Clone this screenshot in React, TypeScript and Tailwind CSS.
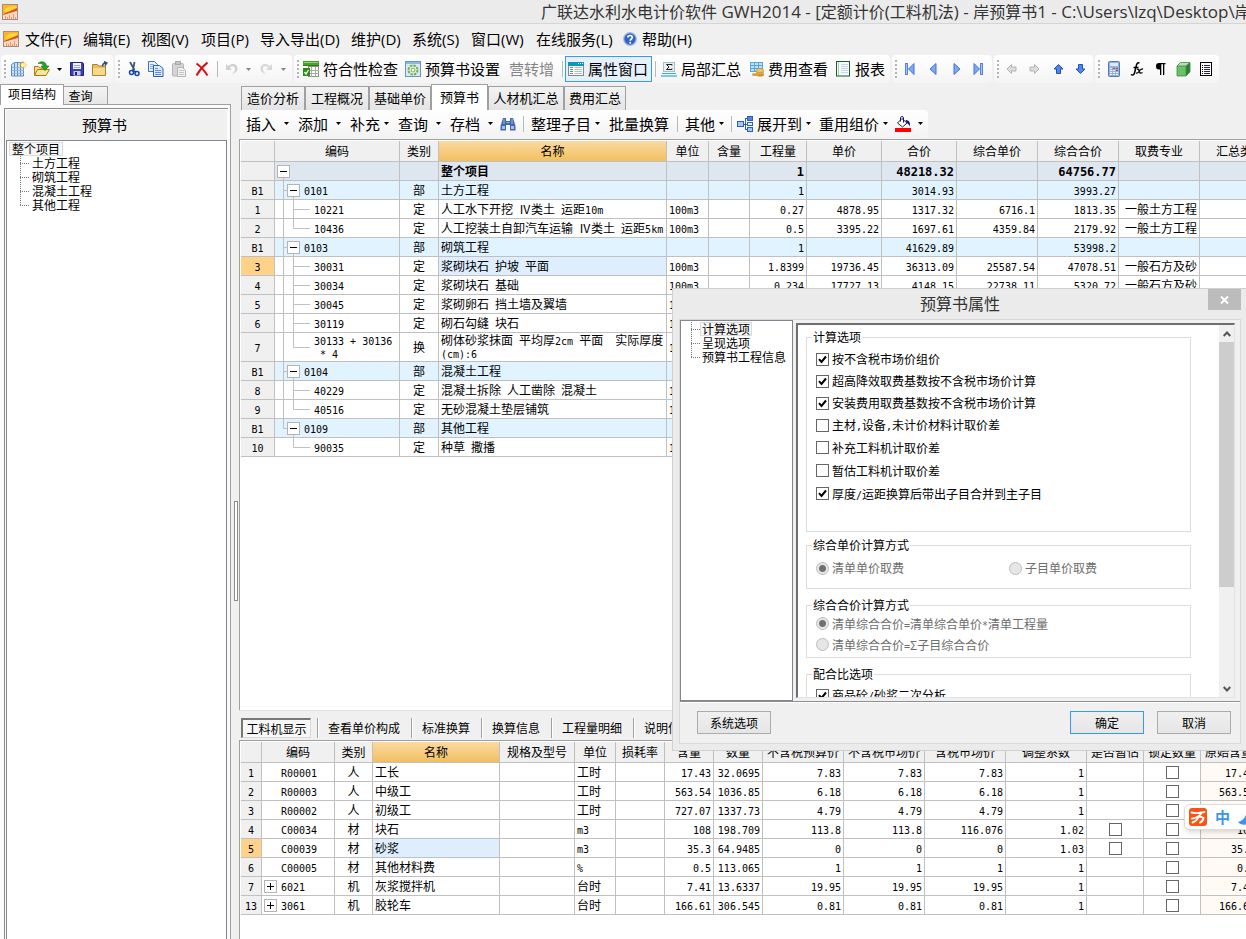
import React from "react";
import type { ReactNode } from "react";

const CJK = "font-['Noto_Sans_CJK_SC','Liberation_Sans',sans-serif]";
const UI = "font-['Open_Sans','Noto_Sans_CJK_SC',sans-serif]";
const MONO = "font-['DejaVu_Sans_Mono','Noto_Sans_CJK_SC',monospace]";

/* Half-width runs are set in the grid's monospaced face, the rest in the CJK face. */
function Mixed({ text, bold = false }: { text: string; bold?: boolean }) {
  const parts = text.split(/([\x20-\x7e]+)/).filter((p) => p !== "");
  return (
    <span className="whitespace-pre">
      {parts.map((p, i) =>
        /^[\x20-\x7e]+$/.test(p) ? (
          <span key={i} className={`leading-none ${MONO} ${bold ? "text-[12px]" : "text-[10px]"}`}>
            {p}
          </span>
        ) : (
          <span key={i}>{p}</span>
        ),
      )}
    </span>
  );
}

/* ---------- icons ---------- */

function AppIcon() {
  return (
    <svg width="16" height="16" viewBox="0 0 16 16" className="shrink-0" aria-hidden="true">
      <rect x="0.5" y="0.5" width="15" height="15" fill="#f6b27c" stroke="#a98a7c" />
      <path d="M1 1h14v4L3 10l-2-1z" fill="#f9b524" />
      <path d="M2 7C4 3 8 2 13 2l2 1-2 3-8 3z" fill="#fdd835" />
      <path d="M1 10 15 4v3L2 11.500z" fill="#d9541e" />
      <path d="M1 11 15 7v8H1z" fill="#fbd9c2" />
      <path d="M3.500 15v-3M5.500 15v-2M7.500 15v-4M9.500 15v-2M11.500 15v-5M13.500 15v-2" stroke="#e39a74" />
    </svg>
  );
}

function Caret() {
  return (
    <svg width="5" height="3" viewBox="0 0 5 3" className="shrink-0" aria-hidden="true">
      <path d="M0 0h5L2.5 3z" fill="currentColor" />
    </svg>
  );
}

function Svg({ w = 16, children }: { w?: number; children: ReactNode }) {
  return (
    <svg width={w} height="16" viewBox={`0 0 ${w} 16`} className="shrink-0" aria-hidden="true">
      {children}
    </svg>
  );
}

const NewIcon = () => (
  <Svg>
    <path d="M0.500 3.500 3.500 1.500h9v13.500h-12z" fill="#cfe2f7" stroke="#5b8cc4" />
    <path d="M3.500 2v13M6.500 2v13M9.500 2v13" stroke="#5b8cc4" />
    <path d="M1 6.500h12M1 9.500h12M1 12.500h12" stroke="#8fb4e0" />
    <path d="M12 0v8M8 4h8M9.2 1.2l5.6 5.6M14.8 1.2 9.2 6.8" stroke="#f3c21a" />
    <circle cx="12" cy="4" r="2" fill="#fff3a0" />
  </Svg>
);
const OpenIcon = () => (
  <Svg>
    <path d="M0.5 14.5V5.5h4l1.5 1.5h6v3" fill="#f5dd8a" stroke="#a87b16" />
    <path d="m0.500 14.500 3-6h12l-3.500 6z" fill="#fbe496" stroke="#a87b16" />
    <path d="M4 2.500C7-.5 12 .5 12.500 5H15l-4 4.500L7 5h2.500C9 3 7 2 4 2.500z" fill="#28a428" stroke="#0d6b0d" strokeWidth=".6" />
  </Svg>
);
const SaveIcon = () => (
  <Svg w={14}>
    <path d="M0.500 1.500h12l1 1v12h-13z" fill="#3b3fb6" stroke="#20247e" />
    <path d="M3 2h8v6H3z" fill="#f3f4fb" />
    <path d="M4 4.500h6M4 6.500h6" stroke="#9aa0d0" />
    <path d="M3.500 10h7v4.500h-7z" fill="#c6c9e8" />
    <path d="M5 11h2v3H5z" fill="#20247e" />
  </Svg>
);
const FolderIcon = () => (
  <Svg>
    <path d="M0.500 3.500h5l1.500 1.500h6.500v9.500h-13z" fill="#e9bf5c" stroke="#a8843a" />
    <path d="M1 7h12v7H1z" fill="#f8d98a" />
    <path d="M10.500 5.500c0-2 1-3.500 3.500-3.500M12 .500 15 2l-2 2.500" fill="none" stroke="#34506f" strokeWidth="1.400" />
  </Svg>
);
const CutIcon = () => (
  <Svg w={12}>
    <path d="M2 1l4.500 8M6.500 1 5 9" stroke="#3e5873" strokeWidth="1.800" />
    <circle cx="3.500" cy="11.500" r="2" fill="none" stroke="#1543a8" strokeWidth="1.500" />
    <circle cx="9" cy="12.500" r="2" fill="none" stroke="#1543a8" strokeWidth="1.500" />
    <path d="M5 9.500 8 11" stroke="#1543a8" strokeWidth="1.500" />
  </Svg>
);
const CopyIcon = () => (
  <Svg>
    <path d="M0.500 0.500h6l3 3v7h-9z" fill="#eaf3fd" stroke="#3a70c0" />
    <path d="M2 3.500h4M2 5.500h4M2 7.500h4" stroke="#7fa8e0" />
    <path d="M5.500 4.500h6l3.500 3v8h-9.500z" fill="#dceafb" stroke="#2a5fb4" />
    <path d="M7 9.500h6M7 11.500h6M7 13.500h6M7 7.500h3" stroke="#5a8fd8" />
  </Svg>
);
const PasteIcon = () => (
  <Svg w={14}>
    <rect x="0.500" y="2.500" width="11" height="12.500" rx="1" fill="#d5d5d5" stroke="#b3b3b3" />
    <rect x="3.500" y="0.500" width="5" height="3" fill="#c4c4c4" stroke="#aaa" />
    <path d="M5.500 6.500h5l3 3v6h-8z" fill="#f1f1f1" stroke="#b3b3b3" />
    <path d="M7 9.500h5M7 11.500h5M7 13.500h5" stroke="#c6c6c6" />
  </Svg>
);
const DeleteIcon = () => (
  <Svg w={14}>
    <path d="M1.500 2.500C5 5 9 9 12.500 14.500" stroke="#d40f16" strokeWidth="2" fill="none" />
    <path d="M12.500 1.500C8 5 4 10 1.500 14.500" stroke="#d40f16" strokeWidth="2" fill="none" />
  </Svg>
);
const UndoIcon = () => (
  <Svg w={13}>
    <path d="M1 3v6h6L4.800 6.800C7 4.500 10 5 10 8c0 2-1 3.500-3 5 4-1 5.500-3 5.500-5.500C12.500 3 7 1.500 3.300 5.200z" fill="#d0d0d0" />
  </Svg>
);
const RedoIcon = () => (
  <Svg w={13}>
    <path d="M12 3v6H6l2.200-2.200C6 4.500 3 5 3 8c0 2 1 3.500 3 5-4-1-5.500-3-5.500-5.500C.5 3 6 1.500 9.700 5.200z" fill="#d8d8d8" />
  </Svg>
);
const CheckSheetIcon = () => (
  <Svg>
    <rect x="5.500" y="5.500" width="10" height="10" fill="#fff" stroke="#8a8f87" />
    <path d="M6 9.500h10M6 12.500h10M8.500 6v10M12.500 6v10" stroke="#a9ada6" />
    <rect x="0" y="0" width="16" height="5" fill="#4aa329" />
    <path d="M0 4.500h16" stroke="#2f7d15" />
    <path d="M1 1.500h14" stroke="#8fd070" />
    <rect x="0" y="7" width="7" height="8" fill="#2f8a18" />
    <path d="m1.500 11 1.500 2 2.500-4" stroke="#fff" strokeWidth="1.300" fill="none" />
  </Svg>
);
const SettingsIcon = () => (
  <Svg>
    <rect x="0.500" y="0.500" width="15" height="15" fill="#d9e9fa" stroke="#6a93c8" />
    <rect x="1" y="1" width="14" height="2" fill="#8fb6e6" />
    <circle cx="8" cy="9" r="4.500" fill="#e9f6df" stroke="#6fae55" strokeWidth="2" strokeDasharray="2.500 1" />
    <circle cx="8" cy="9" r="2" fill="#fff" stroke="#6fae55" />
  </Svg>
);
const WindowListIcon = () => (
  <Svg>
    <rect x="0.500" y="1.500" width="15" height="13" fill="#fff" stroke="#7a8b99" />
    <rect x="0" y="1" width="16" height="4" fill="#0f93bf" />
    <path d="M10 2.500h1M12 2.500h1M14 2.500h1" stroke="#fff" />
    <path d="M2 6.500h3M2 8.500h3M2 10.500h3M2 12.500h3" stroke="#6f8d6f" />
    <path d="M6.500 6.500H14M6.500 8.500H14M6.500 10.500H14M6.500 12.500H14" stroke="#b4bcc4" />
  </Svg>
);
const SigmaIcon = () => (
  <Svg>
    <rect x="2.500" y="1.500" width="11" height="9" fill="#e7f0f2" stroke="#a9bec6" />
    <path d="M11 4.500V3.500H5.500L8 6 5.500 8.500H11v-1" fill="none" stroke="#222" />
    <path d="M1 12h14v1H1z" fill="#3ab0cc" />
    <path d="M0 14h16v2H0z" fill="#7ccbe0" />
  </Svg>
);
const FeeIcon = () => (
  <Svg w={14}>
    <path d="M0 1h13v10H0z" fill="#bfe0f5" />
    <path d="M0 1.500h13M0 4.500h13M0 7.500h13M0 10.500h8M.5 1v10M4.500 1v10M8.500 1v9M12.500 1v6" stroke="#58a6d8" />
    <ellipse cx="10" cy="13.500" rx="4" ry="2" fill="#c8912f" />
    <ellipse cx="10" cy="11.500" rx="4" ry="2" fill="#dca845" />
    <ellipse cx="10" cy="9.500" rx="4" ry="2" fill="#efc56c" stroke="#b98324" strokeWidth=".5" />
    <ellipse cx="5" cy="13.500" rx="3" ry="1.500" fill="#d9a23e" />
  </Svg>
);
const ReportIcon = () => (
  <Svg w={15}>
    <rect x="0.500" y="0.500" width="13" height="14.500" fill="#f7fbff" stroke="#1b5d2c" />
    <path d="M2.500 1.500v13" stroke="#5f9a6c" strokeDasharray="1 1" />
    <path d="M5 3.500h7M5 5.500h7M5 7.500h7M5 9.500h7M5 11.500h7" stroke="#c3d6ea" />
  </Svg>
);
const NavIcon = ({ dir, bar = false }: { dir: "l" | "r"; bar?: boolean }) => (
  <Svg w={10}>
    <g transform={dir === "l" ? undefined : "translate(10 0) scale(-1 1)"}>
      {bar && <rect x="0.500" y="2.500" width="2" height="11" fill="#a9c5f7" stroke="#5583dc" />}
      <path d={bar ? "M9 2.500v11L3.500 8z" : "M7 2.500v11L1 8z"} fill="#7ea8f4" stroke="#4374d8" />
    </g>
  </Svg>
);
const ArrowIcon = ({ turn, on = false }: { turn: number; on?: boolean }) => (
  <Svg w={11}>
    <path
      transform={`rotate(${turn} 5.5 8)`}
      d="M5.500 3.500 10 8H7.500v4.500h-4V8H1z"
      fill={on ? "#4f86ee" : "#dcdcdc"}
      stroke={on ? "#2450b8" : "#b4b4b4"}
    />
  </Svg>
);
const CalcIcon = () => (
  <Svg w={12}>
    <rect x="0.500" y="0.500" width="11" height="15" rx="1" fill="#8fb0e0" stroke="#5a78ac" />
    <rect x="2" y="2" width="8" height="3" fill="#dcebfb" />
    <path d="M2 7.500h8M2 9.500h8M2 11.500h8M2 13.500h8" stroke="#eef4fd" strokeDasharray="2 1" />
    <path d="M5 7.500h2M8 7.500h2M8 9.500h2" stroke="#d23c3c" />
  </Svg>
);
const FxIcon = () => (
  <Svg w={14}>
    <path d="M9.500 2C7.500 1 6.500 3 6 6L4.500 12c-.5 2-2 2.500-3.500 1.500M3.500 6.500h5" fill="none" stroke="#000" strokeWidth="1.500" />
    <path d="M7 8.500c2-1 2 1 2.500 2.500s1.500 1.500 3 .500M13 8c-2-.5-3 1-4 2.500S7 12.500 6 12" fill="none" stroke="#000" strokeWidth="1.300" />
  </Svg>
);
const ParaIcon = () => (
  <Svg w={11}>
    <path d="M10.500 2H4a3 3.200 0 0 0 0 6.400h1V14h1.300V3.200h1.700V14h1.300V3.200h1.200z" fill="#000" />
  </Svg>
);
const CubeIcon = () => (
  <Svg w={15}>
    <path d="M1 5h9v10H1z" fill="#6cc06a" />
    <path d="M1 5 4.500 1.500H14L10 5z" fill="#b4e2ac" />
    <path d="M10 5l4-3.500V11l-4 4z" fill="#2e7f34" />
    <path d="M1 5 4.500 1.500H14V11l-4 4H1zM1 5h9v10M10 5l4-3.500" fill="none" stroke="#3f8a45" strokeWidth=".8" />
  </Svg>
);
const ListIcon = () => (
  <Svg w={12}>
    <rect x="0.500" y="1.500" width="11" height="13" fill="#fff" stroke="#000" />
    <path d="M2 4.500h1M2 6.500h1M2 8.500h1M2 10.500h1M2 12.500h1" stroke="#000" />
    <path d="M4 4.500h6M4 6.500h6M4 8.500h6M4 10.500h6M4 12.500h6" stroke="#20207a" />
  </Svg>
);
const HelpIcon = () => (
  <Svg w={14}>
    <circle cx="7" cy="8" r="6.300" fill="#2f65c9" stroke="#a9bbdf" strokeWidth="1.300" />
    <path d="M4.800 6.500C4.800 3.800 9.300 3.900 9.300 6.500 9.300 8 7.200 8 7.200 9.800" fill="none" stroke="#fff" strokeWidth="1.700" />
    <circle cx="7.200" cy="11.800" r="1" fill="#fff" />
  </Svg>
);
const FindIcon = () => (
  <Svg>
    <path d="M3 2h3v3h4V2h3l2.500 8v4.500H10V9H6v5.500H.5V10z" fill="#4268ad" />
    <path d="M2 10h3v3H2zM11 10h3v3h-3z" fill="#a9c3ee" />
    <path d="M4 3v5M12 3v5M6.500 6.500h3" stroke="#9db9e8" />
  </Svg>
);
const ExpandIcon = () => (
  <Svg>
    <path d="M6 8.500h4M8.500 3v10M8 2.500h3M8 13.500h3" stroke="#3c5c94" fill="none" />
    <rect x="0.500" y="5.500" width="6" height="5" fill="#a8c6f2" stroke="#2f5fb0" />
    <rect x="10.500" y="0.500" width="5" height="4" fill="#4f86dd" stroke="#2f5fb0" />
    <rect x="10.500" y="6.500" width="5" height="3" fill="#e8f0fc" stroke="#2f5fb0" />
    <rect x="10.500" y="11.500" width="5" height="4" fill="#a8c6f2" stroke="#2f5fb0" />
  </Svg>
);
const FillIcon = () => (
  <Svg>
    <path d="M7 2.500 12 7l-4.500 4L2.500 7z" fill="#fff" stroke="#222" />
    <path d="M5.500 5.500v-4C5.500.3 8.500.3 8.500 1.500v5" fill="none" stroke="#10107a" />
    <path d="M10.500 4c3 0 5 2 4.500 6.500-1-2-1.500-2.500-3-3.500z" fill="#10107a" />
    <rect x="0" y="12" width="16" height="4" fill="#ff0000" />
  </Svg>
);

/* ---------- shared controls ---------- */

function ToolButton({
  label,
  icon,
  text,
  caret = false,
  disabled = false,
  className,
}: {
  label?: string;
  icon?: ReactNode;
  text?: string;
  caret?: boolean;
  disabled?: boolean;
  className: string;
}) {
  return (
    <button
      type="button"
      aria-label={label}
      disabled={disabled}
      className={`flex h-[26px] shrink-0 items-center whitespace-nowrap text-[15px] leading-5 ${disabled ? "text-[#858585]" : "text-black"} ${className}`}
    >
      {icon}
      {text && <span>{text}</span>}
      {caret && <Caret />}
    </button>
  );
}

function Grip({ className }: { className: string }) {
  return (
    <span className={`flex shrink-0 items-center pl-[3px] ${className}`}>
      <span className="h-[18px] w-0.5 bg-[repeating-linear-gradient(to_bottom,#b4b4b4_0_2px,transparent_2px_4px)]" />
    </span>
  );
}

function Divider({ className }: { className: string }) {
  return (
    <span className={`flex shrink-0 items-center ${className}`}>
      <span className="h-4 w-px bg-[#b9b9b9]" />
    </span>
  );
}

function ToolGroup({ children }: { children: ReactNode }) {
  return (
    <div role="toolbar" className="flex h-7 shrink-0 items-center rounded-sm bg-linear-to-b from-white to-[#f4f4f4]">
      {children}
    </div>
  );
}

function Tick({ checked = false, label }: { checked?: boolean; label?: string }) {
  return (
    <span className="inline-grid size-[13px] shrink-0 align-middle">
      <input
        type="checkbox"
        defaultChecked={checked}
        aria-label={label}
        className="peer col-start-1 row-start-1 size-[13px] appearance-none border border-[#666] bg-white"
      />
      <svg
        viewBox="0 0 13 13"
        className="pointer-events-none invisible col-start-1 row-start-1 size-[13px] peer-checked:visible"
        aria-hidden="true"
      >
        <path d="M3 6.200 5.500 9 10 3.500" fill="none" stroke="#000" strokeWidth="2" />
      </svg>
    </span>
  );
}

/* ---------- header ---------- */

const menus = [
  { text: "文件(F)", w: "w-[58px]" },
  { text: "编辑(E)", w: "w-[58px]" },
  { text: "视图(V)", w: "w-[60px]" },
  { text: "项目(P)", w: "w-[59px]" },
  { text: "导入导出(D)", w: "w-[91px]" },
  { text: "维护(D)", w: "w-[61px]" },
  { text: "系统(S)", w: "w-[59px]" },
  { text: "窗口(W)", w: "w-[65px]" },
  { text: "在线服务(L)", w: "w-[87px]" },
];

const titleParts = [
  "广联达水利水电计价软件",
  " GWH2014 - [",
  "定额计价",
  "(",
  "工料机法",
  ") - ",
  "岸预算书",
  "1 - C:\\Users\\lzq\\Desktop\\",
  "岸",
];

function Header() {
  return (
    <header className={`shrink-0 ${UI}`}>
      <div className="flex h-6 items-center overflow-hidden border-b border-[#d5d5d5] bg-[#ebebeb] pl-0.5">
        <AppIcon />
        <h1 className="ml-[523px] whitespace-pre text-[16px] leading-6 text-[#333]">
          {titleParts.map((p, i) => (
            <span key={i} className={i % 2 === 1 ? "text-[17px] leading-none" : ""}>
              {p}
            </span>
          ))}
        </h1>
      </div>
      <nav className="flex h-[31px] items-center overflow-hidden pb-0.5 pl-[3px] text-[15px] leading-5">
        <AppIcon />
        <div className="ml-1.5 flex">
          {menus.map((m) => (
            <button key={m.text} type="button" className={`shrink-0 whitespace-nowrap text-left ${m.w}`}>
              {m.text}
            </button>
          ))}
          <button type="button" className="flex shrink-0 items-center gap-[5px] whitespace-nowrap">
            <HelpIcon />
            帮助(H)
          </button>
        </div>
      </nav>
      <div className="flex h-[29px] items-start gap-0.5 overflow-hidden pl-px">
        <ToolGroup>
          <Grip className="w-[10px]" />
          <ToolButton label="新建" icon={<NewIcon />} className="w-[23px]" />
          <ToolButton label="打开" icon={<OpenIcon />} caret className="w-9 gap-[7px]" />
          <ToolButton label="保存" icon={<SaveIcon />} className="w-[22px]" />
          <ToolButton label="目录" icon={<FolderIcon />} className="w-[21px]" />
        </ToolGroup>
        <ToolGroup>
          <Grip className="w-[13px]" />
          <ToolButton label="剪切" icon={<CutIcon />} className="w-5" />
          <ToolButton label="复制" icon={<CopyIcon />} className="w-6" />
          <ToolButton label="粘贴" icon={<PasteIcon />} disabled className="w-[23px]" />
          <ToolButton label="删除" icon={<DeleteIcon />} className="w-[22px]" />
          <Divider className="w-2" />
          <ToolButton label="撤销" icon={<UndoIcon />} caret disabled className="w-[35px] gap-2" />
          <ToolButton label="恢复" icon={<RedoIcon />} caret disabled className="w-8 gap-2" />
        </ToolGroup>
        <ToolGroup>
          <Grip className="w-[9px]" />
          <ToolButton icon={<CheckSheetIcon />} text="符合性检查" className="w-[102px] gap-1" />
          <ToolButton icon={<SettingsIcon />} text="预算书设置" className="w-[104px] gap-1" />
          <ToolButton text="营转增" disabled className="w-[53px]" />
          <Divider className="w-[3px]" />
          <ToolButton
            icon={<WindowListIcon />}
            text="属性窗口"
            className="w-[87px] gap-1 border border-[#3399ff] bg-[#e6f0fa] pl-0.5"
          />
          <Divider className="w-[9px] pl-[3px]" />
          <ToolButton icon={<SigmaIcon />} text="局部汇总" className="w-[89px] gap-1" />
          <ToolButton icon={<FeeIcon />} text="费用查看" className="w-[86px] gap-1" />
          <ToolButton icon={<ReportIcon />} text="报表" className="w-[54px] gap-1" />
        </ToolGroup>
        <ToolGroup>
          <Grip className="w-[13px]" />
          <ToolButton label="首条" icon={<NavIcon dir="l" bar />} className="w-6" />
          <ToolButton label="上一条" icon={<NavIcon dir="l" />} className="w-[22px]" />
          <ToolButton label="下一条" icon={<NavIcon dir="r" />} className="w-[22px]" />
          <ToolButton label="末条" icon={<NavIcon dir="r" bar />} className="w-[19px]" />
        </ToolGroup>
        <ToolGroup>
          <Grip className="w-3" />
          <ToolButton label="左移" icon={<ArrowIcon turn={-90} />} disabled className="w-[23px]" />
          <ToolButton label="右移" icon={<ArrowIcon turn={90} />} disabled className="w-6" />
          <ToolButton label="上移" icon={<ArrowIcon turn={0} on />} className="w-[22px]" />
          <ToolButton label="下移" icon={<ArrowIcon turn={180} on />} className="w-[18px]" />
        </ToolGroup>
        <ToolGroup>
          <Grip className="w-[13px]" />
          <ToolButton label="计算器" icon={<CalcIcon />} className="w-[22px]" />
          <ToolButton label="函数" icon={<FxIcon />} className="w-[25px]" />
          <ToolButton label="段落" icon={<ParaIcon />} className="w-[21px]" />
          <ToolButton label="图元" icon={<CubeIcon />} className="w-6" />
          <ToolButton label="列表" icon={<ListIcon />} className="w-[19px]" />
        </ToolGroup>
      </div>
    </header>
  );
}

/* ---------- trees ---------- */

function Branch({ last }: { last: boolean }) {
  return (
    <svg width="9" height="14" viewBox="0 0 9 14" className="shrink-0" aria-hidden="true">
      <path d={last ? "M.5 0V7" : "M.5 0V14"} stroke="#777" strokeDasharray="1 1" />
      <path d="M0 7.500H9" stroke="#777" strokeDasharray="1 1" />
    </svg>
  );
}

const projectNodes = ["土方工程", "砌筑工程", "混凝土工程", "其他工程"];

function Sidebar() {
  return (
    <aside className="flex w-[231px] shrink-0 flex-col">
      <div role="tablist" className="flex h-[21px] shrink-0 items-end text-[12px] leading-4">
        <button
          type="button"
          role="tab"
          aria-selected="true"
          className="h-[21px] w-16 border-x border-t border-[#a0a0a0] bg-white pb-0.5 text-center"
        >
          项目结构
        </button>
        <button
          type="button"
          role="tab"
          aria-selected="false"
          className="h-[19px] w-11 border-y border-r border-[#a0a0a0] bg-linear-to-b from-[#f4f4f4] to-[#e6e6e6] pr-2.5 text-center"
        >
          查询
        </button>
        <span className="h-px flex-1 bg-[#a0a0a0]" />
      </div>
      <div className="flex min-h-0 flex-1 flex-col border-r border-[#a0a0a0] bg-[#fbfbfb] pt-[3px] pr-0.5 pl-1">
        <div className="flex min-h-0 flex-1 flex-col border-t border-l border-[#8a8a8a] px-px pt-px">
          <h2 className="h-[30px] shrink-0 bg-[#f0f0f0] pr-6 text-center text-[15px] leading-[30px]">预算书</h2>
          <ul className="min-h-0 flex-1 border-x border-t border-[#7f8790] bg-white pt-px text-[12px] leading-[14px]">
            <li>
              <span className="ml-0.5 inline-block h-[14px] border border-[#dcdcdc] bg-[#f7f7f7] px-0.5 leading-3">
                整个项目
              </span>
              <ul>
                {projectNodes.map((n, i) => (
                  <li key={n} className="flex h-[14px] gap-[3px] pl-[13px]">
                    <Branch last={i === projectNodes.length - 1} />
                    {n}
                  </li>
                ))}
              </ul>
            </li>
          </ul>
        </div>
      </div>
    </aside>
  );
}

/* ---------- main grid ---------- */

const LINE = "border-[#c0c0c0]";

type Row = {
  no: string;
  kind: "root" | "part" | "item" | "last";
  code: string;
  cat: string;
  name: string;
  vals: string[];
  tail?: boolean;
  selected?: boolean;
};

const rows: Row[] = [
  { no: "", kind: "root", code: "", cat: "", name: "整个项目", vals: ["", "", "1", "", "48218.32", "", "64756.77", ""] },
  { no: "B1", kind: "part", code: "0101", cat: "部", name: "土方工程", vals: ["", "", "1", "", "3014.93", "", "3993.27", ""] },
  { no: "1", kind: "item", code: "10221", cat: "定", name: "人工水下开挖 Ⅳ类土 运距10m", vals: ["100m3", "", "0.27", "4878.95", "1317.32", "6716.1", "1813.35", "一般土方工程"] },
  { no: "2", kind: "last", code: "10436", cat: "定", name: "人工挖装土自卸汽车运输 Ⅳ类土 运距5km", vals: ["100m3", "", "0.5", "3395.22", "1697.61", "4359.84", "2179.92", "一般土方工程"] },
  { no: "B1", kind: "part", code: "0103", cat: "部", name: "砌筑工程", vals: ["", "", "1", "", "41629.89", "", "53998.2", ""] },
  { no: "3", kind: "item", code: "30031", cat: "定", name: "浆砌块石 护坡 平面", vals: ["100m3", "", "1.8399", "19736.45", "36313.09", "25587.54", "47078.51", "一般石方及砂"], selected: true },
  { no: "4", kind: "item", code: "30034", cat: "定", name: "浆砌块石 基础", vals: ["100m3", "", "0.234", "17727.13", "4148.15", "22738.11", "5320.72", "一般石方及砂"] },
  { no: "5", kind: "item", code: "30045", cat: "定", name: "浆砌卵石 挡土墙及翼墙", vals: ["100m3", "", "", "", "", "", "", ""] },
  { no: "6", kind: "item", code: "30119", cat: "定", name: "砌石勾缝 块石", vals: ["100m3", "", "", "", "", "", "", ""] },
  { no: "7", kind: "last", code: "30133 + 30136\n * 4", cat: "换", name: "砌体砂浆抹面 平均厚2cm 平面  实际厚度\n(cm):6", vals: ["100m3", "", "", "", "", "", "", ""] },
  { no: "B1", kind: "part", code: "0104", cat: "部", name: "混凝土工程", vals: ["", "", "", "", "", "", "", ""] },
  { no: "8", kind: "item", code: "40229", cat: "定", name: "混凝土拆除 人工凿除 混凝土", vals: ["100m3", "", "", "", "", "", "", ""] },
  { no: "9", kind: "last", code: "40516", cat: "定", name: "无砂混凝土垫层铺筑", vals: ["100m3", "", "", "", "", "", "", ""] },
  { no: "B1", kind: "part", code: "0109", cat: "部", name: "其他工程", vals: ["", "", "", "", "", "", "", ""], tail: true },
  { no: "10", kind: "last", code: "90035", cat: "定", name: "种草 撒播", vals: ["100m3", "", "", "", "", "", "", ""], tail: true },
];

const mainCols = [
  { t: "", w: "w-[34px]" },
  { t: "编码", w: "w-[125px]" },
  { t: "类别", w: "w-[39px]" },
  { t: "名称", w: "w-[228px]" },
  { t: "单位", w: "w-[42px]" },
  { t: "含量", w: "w-[41px]" },
  { t: "工程量", w: "w-[57px]" },
  { t: "单价", w: "w-[75px]" },
  { t: "合价", w: "w-[75px]" },
  { t: "综合单价", w: "w-[81px]" },
  { t: "综合合价", w: "w-[81px]" },
  { t: "取费专业", w: "w-[81px]" },
  { t: "汇总类别", w: "w-[81px]" },
];

function ColHead({ t, w }: { t: string; w: string }) {
  return (
    <th
      scope="col"
      className={`h-[21px] overflow-hidden border-r border-b p-0 font-normal ${LINE} ${w} ${
        t === "名称" ? "bg-linear-to-b from-[#fbd9a0] to-[#f1c05f]" : "bg-[#f0f0f0]"
      }`}
    >
      {t}
    </th>
  );
}

function CodeTree({ row, tall }: { row: Row; tall: boolean }) {
  const h = tall ? 28 : 18;
  const mid = tall ? 14.5 : 9.5;
  if (row.kind === "root") {
    return (
      <button type="button" aria-label="折叠整个项目" className="block">
        <svg width="18" height="18" viewBox="0 0 18 18">
          <path d="M8.500 15v3" stroke="#c0c0c0" />
          <rect x="2.500" y="3.500" width="12" height="12" fill="#fff" stroke="#b4b4b4" />
          <path d="M5 9.500h7" stroke="#000" />
        </svg>
      </button>
    );
  }
  if (row.kind === "part") {
    return (
      <button type="button" aria-label={`折叠${row.name}`} className="block">
        <svg width="29" height="18" viewBox="0 0 29 18">
          <path d={`M8.500 0V${row.tail ? 9.5 : 18}M8.500 9.500H12M18.500 16v2`} stroke="#c0c0c0" fill="none" />
          <rect x="12.500" y="3.500" width="12" height="12" fill="#fff" stroke="#b4b4b4" />
          <path d="M15 9.500h7" stroke="#000" />
        </svg>
      </button>
    );
  }
  return (
    <svg width="39" height={h} viewBox={`0 0 39 ${h}`} className="shrink-0" aria-hidden="true">
      {!row.tail && <path d={`M8.500 0V${h}`} stroke="#c0c0c0" />}
      <path d={`M18.500 0V${row.kind === "last" ? mid : h}M18.500 ${mid}H35`} stroke="#c0c0c0" fill="none" />
    </svg>
  );
}

function Lines({ text, bold }: { text: string; bold?: boolean }) {
  return (
    <>
      {text.split("\n").map((l) => (
        <span key={l} className="block">
          <Mixed text={l} bold={bold} />
        </span>
      ))}
    </>
  );
}

function MainGrid() {
  return (
    <table className="w-[1040px] table-fixed border-separate border-spacing-0 text-[12px] leading-[14px]">
      <thead>
        <tr>
          {mainCols.map((c, i) => (
            <ColHead key={i} {...c} />
          ))}
        </tr>
      </thead>
      <tbody>
        {rows.map((r, i) => {
          const tall = r.code.includes("\n");
          const bg = r.kind === "root" ? "bg-[#dee6f0]" : r.kind === "part" ? "bg-[#e0f3ff]" : "bg-white";
          const cell = `overflow-hidden border-r border-b p-0 ${LINE} ${tall ? "h-[29px] leading-3" : "h-[19px]"}`;
          const bold = r.kind === "root";
          return (
            <tr key={i} className={`${bg} ${bold ? "font-bold" : ""}`}>
              <td className={`${cell} text-center ${r.selected ? "bg-[#ffd28a]" : "bg-[#f0f0f0]"}`}>
                <Mixed text={r.no} />
              </td>
              <td className={cell}>
                <div className="flex items-center">
                  <CodeTree row={r} tall={tall} />
                  <span>
                    <Lines text={r.code} />
                  </span>
                </div>
              </td>
              <td className={`${cell} text-center`}>{r.cat}</td>
              <td className={`${cell} ${r.selected ? "bg-[#dfeeff]" : ""}`}>
                <div className="pl-0.5">
                  <Lines text={r.name} />
                </div>
              </td>
              {r.vals.map((v, j) => (
                <td key={j} className={`${cell} ${j === 0 ? "text-left" : "text-right"}`}>
                  <div className="px-0.5">
                    <Mixed text={v} bold={bold} />
                  </div>
                </td>
              ))}
              <td className={cell} />
            </tr>
          );
        })}
      </tbody>
    </table>
  );
}

/* ---------- resources grid ---------- */

const resCols = [
  { t: "", w: "w-[21px]" },
  { t: "编码", w: "w-[73px]" },
  { t: "类别", w: "w-[38px]" },
  { t: "名称", w: "w-[127px]" },
  { t: "规格及型号", w: "w-[75px]" },
  { t: "单位", w: "w-[41px]" },
  { t: "损耗率", w: "w-[49px]" },
  { t: "含量", w: "w-[49px]" },
  { t: "数量", w: "w-[49px]" },
  { t: "不含税预算价", w: "w-[81px]" },
  { t: "不含税市场价", w: "w-[81px]" },
  { t: "含税市场价", w: "w-[81px]" },
  { t: "调整系数", w: "w-[81px]" },
  { t: "是否暂估", w: "w-[57px]" },
  { t: "锁定数量", w: "w-[57px]" },
  { t: "原始含量", w: "w-[57px]" },
];

const resources = [
  { no: "1", code: "R00001", cat: "人", name: "工长", unit: "工时", v: ["17.43", "32.0695", "7.83", "7.83", "7.83", "1"] },
  { no: "2", code: "R00003", cat: "人", name: "中级工", unit: "工时", v: ["563.54", "1036.85", "6.18", "6.18", "6.18", "1"] },
  { no: "3", code: "R00002", cat: "人", name: "初级工", unit: "工时", v: ["727.07", "1337.73", "4.79", "4.79", "4.79", "1"] },
  { no: "4", code: "C00034", cat: "材", name: "块石", unit: "m3", v: ["108", "198.709", "113.8", "113.8", "116.076", "1.02"], est: true },
  { no: "5", code: "C00039", cat: "材", name: "砂浆", unit: "m3", v: ["35.3", "64.9485", "0", "0", "0", "1.03"], est: true, selected: true },
  { no: "6", code: "C00005", cat: "材", name: "其他材料费", unit: "%", v: ["0.5", "113.065", "1", "1", "1", "1"] },
  { no: "7", code: "6021", cat: "机", name: "灰浆搅拌机", unit: "台时", v: ["7.41", "13.6337", "19.95", "19.95", "19.95", "1"], plus: true },
  { no: "13", code: "3061", cat: "机", name: "胶轮车", unit: "台时", v: ["166.61", "306.545", "0.81", "0.81", "0.81", "1"], plus: true },
];

function ResourceGrid() {
  const cell = `h-[19px] overflow-hidden border-r border-b p-0 ${LINE}`;
  return (
    <table className="w-[1017px] table-fixed border-separate border-spacing-0 text-[12px] leading-[14px]">
      <thead>
        <tr>
          {resCols.map((c, i) => (
            <ColHead key={i} {...c} />
          ))}
        </tr>
      </thead>
      <tbody>
        {resources.map((r) => (
          <tr key={r.no}>
            <td className={`${cell} text-center ${r.selected ? "bg-[#ffd28a]" : "bg-[#f0f0f0]"}`}>
              <Mixed text={r.no} />
            </td>
            <td className={cell}>
              <div className="flex items-center">
                <span className="flex w-[19px] shrink-0 pl-0.5">
                  {r.plus && (
                    <button type="button" aria-label={`展开${r.name}`}>
                      <svg width="13" height="13" viewBox="0 0 13 13" className="block">
                        <rect x="0.500" y="0.500" width="12" height="12" fill="#fff" stroke="#b4b4b4" />
                        <path d="M3 6.500h7M6.500 3v7" stroke="#000" />
                      </svg>
                    </button>
                  )}
                </span>
                <Mixed text={r.code} />
              </div>
            </td>
            <td className={`${cell} text-center`}>{r.cat}</td>
            <td className={`${cell} ${r.selected ? "bg-[#dfeeff]" : ""}`}>
              <div className="pl-0.5">{r.name}</div>
            </td>
            <td className={cell} />
            <td className={cell}>
              <div className="pl-0.5">
                <Mixed text={r.unit} />
              </div>
            </td>
            <td className={cell} />
            {r.v.map((v, i) => (
              <td key={i} className={`${cell} text-right`}>
                <div className="pr-0.5">
                  <Mixed text={v} />
                </div>
              </td>
            ))}
            <td className={`${cell} text-center leading-none`}>{r.est && <Tick label={`${r.name}是否暂估`} />}</td>
            <td className={`${cell} text-center leading-none`}>
              <Tick label={`${r.name}锁定数量`} />
            </td>
            <td className={`${cell} bg-[#fffaf3] text-right`}>
              <div className="pr-0.5">
                <Mixed text={r.v[0]} />
              </div>
            </td>
          </tr>
        ))}
      </tbody>
    </table>
  );
}

/* ---------- workspace ---------- */

const pageTabs = [
  { t: "造价分析", w: "w-16" },
  { t: "工程概况", w: "w-16" },
  { t: "基础单价", w: "w-[62px]" },
  { t: "预算书", w: "w-[57px]" },
  { t: "人材机汇总", w: "w-[76px]" },
  { t: "费用汇总", w: "w-[62px]" },
];

const detailTabs = ["查看单价构成", "标准换算", "换算信息", "工程量明细", "说明信息"];

function Workspace() {
  return (
    <main className="flex min-w-0 flex-1 flex-col">
      <div role="tablist" className="flex h-[26px] shrink-0 items-end pl-0.5 text-[13px] leading-5">
        {pageTabs.map((p) => {
          const active = p.t === "预算书";
          return (
            <button
              key={p.t}
              type="button"
              role="tab"
              aria-selected={active}
              className={`shrink-0 whitespace-nowrap border-x border-t border-[#a0a0a0] text-center ${p.w} ${
                active ? "h-[26px] bg-white pb-0.5" : "h-6 bg-linear-to-b from-[#f3f3f3] to-[#e4e4e4] pb-0.5"
              }`}
            >
              {p.t}
            </button>
          );
        })}
      </div>
      <div className="flex h-[29px] shrink-0 overflow-hidden pl-px">
        <div role="toolbar" className="flex items-center rounded-sm bg-linear-to-b from-white to-[#f2f2f2] pb-0.5 pl-1.5">
          <ToolButton text="插入" caret className="w-[52px] gap-2" />
          <ToolButton text="添加" caret className="w-[52px] gap-2" />
          <ToolButton text="补充" caret className="w-12 gap-1" />
          <ToolButton text="查询" caret className="w-[52px] gap-2" />
          <ToolButton text="存档" caret className="w-[50px] gap-2" />
          <ToolButton label="查找" icon={<FindIcon />} className="w-[23px]" />
          <Divider className="w-2" />
          <ToolButton text="整理子目" caret className="w-[78px] gap-1" />
          <ToolButton text="批量换算" className="w-[68px]" />
          <Divider className="w-2" />
          <ToolButton text="其他" caret className="w-[46px] gap-1" />
          <Divider className="w-1.5" />
          <ToolButton icon={<ExpandIcon />} text="展开到" caret className="w-[82px] gap-1" />
          <ToolButton text="重用组价" caret className="w-[76px] gap-1" />
          <ToolButton label="填充颜色" icon={<FillIcon />} caret className="w-[33px] gap-[7px]" />
        </div>
      </div>
      <div className="min-h-0 flex-1 overflow-hidden border-t border-l border-[#a0a0a0] bg-white pt-px pl-px">
        <MainGrid />
      </div>
      <div className="flex h-[30px] shrink-0 items-end overflow-hidden border-t border-[#e3e3e3] pb-0.5 pl-0.5 text-[12px] leading-4">
        <button
          type="button"
          className="mr-1.5 h-5 w-[70px] shrink-0 border-t-2 border-l-2 border-r border-b border-t-[#777] border-r-[#d8d8d8] border-b-[#d8d8d8] border-l-[#777] bg-[#f8f8f8] text-center"
        >
          工料机显示
        </button>
        {detailTabs.map((t) => (
          <button
            key={t}
            type="button"
            className="h-5 shrink-0 border-l border-[#a0a0a0] pr-[11px] pl-[10px] whitespace-nowrap shadow-[inset_1px_0_0_#fff]"
          >
            {t}
          </button>
        ))}
      </div>
      <div className="h-[199px] shrink-0 overflow-hidden border-t border-l border-[#a0a0a0] bg-white pt-px pl-px">
        <ResourceGrid />
      </div>
    </main>
  );
}

/* ---------- properties dialog ---------- */

const optionNodes = ["计算选项", "呈现选项", "预算书工程信息"];

const options = [
  { t: "按不含税市场价组价", on: true, h: "h-[22px]" },
  { t: "超高降效取费基数按不含税市场价计算", on: true, h: "h-[22px]" },
  { t: "安装费用取费基数按不含税市场价计算", on: true, h: "h-[22px]" },
  { t: "主材,设备,未计价材料计取价差", on: false, h: "h-[22px]" },
  { t: "补充工料机计取价差", on: false, h: "h-[23px]" },
  { t: "暂估工料机计取价差", on: false, h: "h-[23px]" },
  { t: "厚度/运距换算后带出子目合并到主子目", on: true, h: "h-[23px]" },
];

function Group({ title, className, children }: { title: string; className: string; children: ReactNode }) {
  return (
    <fieldset className={`shrink-0 border border-[#dcdcdc] ${className}`}>
      <legend className="ml-[5px] px-px leading-4">{title}</legend>
      {children}
    </fieldset>
  );
}

function CheckOption({ text, on, h }: { text: string; on: boolean; h: string }) {
  return (
    <label className={`flex items-center gap-[3px] pl-[9px] ${h}`}>
      <Tick checked={on} />
      <Mixed text={text} />
    </label>
  );
}

function RadioOption({ name, text, on = false, className }: { name: string; text: string; on?: boolean; className: string }) {
  return (
    <label className={`flex items-center gap-[3px] text-[#6d6d6d] ${className}`}>
      <input
        type="radio"
        name={name}
        defaultChecked={on}
        disabled
        className="size-[13px] appearance-none rounded-full border border-[#bcbcbc] bg-[#e6e6e6] checked:bg-[radial-gradient(circle,#707070_0_3px,#e6e6e6_4px)]"
      />
      <Mixed text={text} />
    </label>
  );
}

function PropertiesDialog() {
  const button =
    "h-[23px] w-[74px] border bg-linear-to-b from-[#f0f0f0] to-[#e5e5e5] text-center leading-5";
  return (
    <section
      role="dialog"
      aria-labelledby="dialog-title"
      className="absolute top-[288px] left-[672px] flex h-[463px] w-[576px] flex-col border border-[#d0d0d0] bg-[#ebebeb] px-1.5 pb-1.5 text-[12px] leading-[14px]"
    >
      <div className="flex h-[30px] shrink-0 items-start">
        <h2 id="dialog-title" className="flex-1 pl-[33px] text-center text-[16px] leading-7 text-[#333]">
          预算书属性
        </h2>
        <button type="button" aria-label="关闭" className="flex h-[21px] w-[33px] items-center justify-center bg-[#bcbcbc]">
          <svg width="9" height="8" viewBox="0 0 9 8" aria-hidden="true">
            <path d="M1 .5 8 7.500M8 .5 1 7.500" stroke="#fff" strokeWidth="2" />
          </svg>
        </button>
      </div>
      <div className="flex min-h-0 flex-1 flex-col border border-[#d9d9d9] bg-[#f0f0f0]">
        <div className="flex min-h-0 flex-1 border-b border-[#8e8e93]">
          <ul className="w-[113px] shrink-0 border border-[#82878f] bg-white pt-px">
            {optionNodes.map((n, i) => (
              <li key={n} className="flex h-[14px] pl-[10px] whitespace-nowrap">
                <Branch last={i === optionNodes.length - 1} />
                {i === 0 ? (
                  <span className="h-[14px] border border-[#dcdcdc] bg-[#f7f7f7] px-px leading-3">{n}</span>
                ) : (
                  <span className="pl-0.5">{n}</span>
                )}
              </li>
            ))}
          </ul>
          <div className="my-[3px] mr-[5px] ml-[3px] flex min-w-0 flex-1 border-t-2 border-r border-b border-l-2 border-t-[#6e6e6e] border-r-[#e3e3e3] border-b-[#e3e3e3] border-l-[#6e6e6e] bg-white">
            <div className="flex min-w-0 flex-1 flex-col overflow-hidden pt-1 pr-7 pl-2">
              <Group title="计算选项" className="h-[203px] pt-[3px]">
                {options.map((o) => (
                  <CheckOption key={o.t} text={o.t} on={o.on} h={o.h} />
                ))}
              </Group>
              <Group title="综合单价计算方式" className="mt-[5px] h-[52px]">
                <div className="flex pl-[9px]">
                  <RadioOption name="unit" text="清单单价取费" on className="h-[30px] w-[193px]" />
                  <RadioOption name="unit" text="子目单价取费" className="h-[30px]" />
                </div>
              </Group>
              <Group title="综合合价计算方式" className="mt-2 h-[61px]">
                <RadioOption name="total" text="清单综合合价=清单综合单价*清单工程量" on className="h-[21px] pl-[9px]" />
                <RadioOption name="total" text="清单综合合价=Σ子目综合合价" className="h-[21px] pl-[9px]" />
              </Group>
              <Group title="配合比选项" className="mt-2 h-[61px] pt-0.5">
                <CheckOption text="商品砼/砂浆二次分析" on h="h-[22px]" />
              </Group>
            </div>
            <div className="flex w-[15px] shrink-0 flex-col bg-[#f0f0f0]">
              <button type="button" aria-label="向上滚动" className="flex h-[17px] items-center justify-center">
                <svg width="8" height="6" viewBox="0 0 8 6" aria-hidden="true">
                  <path d="M.7 5 4 1.500 7.300 5" fill="none" stroke="#555" strokeWidth="2" />
                </svg>
              </button>
              <div className="h-[245px] bg-[#cdcdcd]" />
              <button type="button" aria-label="向下滚动" className="mt-auto flex h-[17px] items-center justify-center">
                <svg width="8" height="6" viewBox="0 0 8 6" aria-hidden="true">
                  <path d="M.7 1 4 4.500 7.300 1" fill="none" stroke="#555" strokeWidth="2" />
                </svg>
              </button>
            </div>
          </div>
        </div>
        <div className="flex h-[41px] shrink-0 items-start gap-[13px] border-t border-white pt-2 pr-[9px] pl-[17px]">
          <button type="button" className={`${button} mr-auto border-[#acacac]`}>
            系统选项
          </button>
          <button type="button" className={`${button} border-[#3399ff]`}>
            确定
          </button>
          <button type="button" className={`${button} border-[#acacac]`}>
            取消
          </button>
        </div>
      </div>
    </section>
  );
}

/* Input-method bar floating above the window. */
function InputBar() {
  return (
    <div className="absolute top-[804px] left-[1184px] flex h-[26px] w-[90px] items-center gap-2 rounded-md border border-[#dcdcdc] bg-white pl-1 shadow-md">
      <svg width="18" height="18" viewBox="0 0 18 18" className="shrink-0" aria-hidden="true">
        <rect width="18" height="18" rx="3" fill="#fb5412" />
        <path d="M2.500 4.500C7 5.500 12 5 15.500 4M3 10.500C7 10 10 8.500 12 6M9 8.500c2 0 4 .500 5.500 1.500-.5 2.500-1.500 4-3.500 4.500M9.500 9C8.500 11.500 6 13.500 3.500 14.500" fill="none" stroke="#fff" strokeWidth="1.900" strokeLinecap="round" />
      </svg>
      <span className="text-[15px] leading-5 font-bold text-[#3b96e8]">中</span>
      <svg width="16" height="16" viewBox="0 0 16 16" className="shrink-0" aria-hidden="true">
        <path d="M0 13C5 12 8 8 9 2c5 3 5 10 0 13-3 1.500-7 .5-9-2z" fill="#3b96e8" />
      </svg>
    </div>
  );
}

export default function App() {
  return (
    <div className={`relative flex h-screen flex-col overflow-hidden bg-[#f0f0f0] text-black ${CJK}`}>
      <Header />
      <div className="flex min-h-0 flex-1">
        <Sidebar />
        <div className="flex w-2 shrink-0 flex-col items-end justify-center pb-px">
          <div className="mt-20 mr-px h-[100px] w-1 border border-[#8a8a8a] bg-white" />
        </div>
        <Workspace />
      </div>
      <PropertiesDialog />
      <InputBar />
    </div>
  );
}
